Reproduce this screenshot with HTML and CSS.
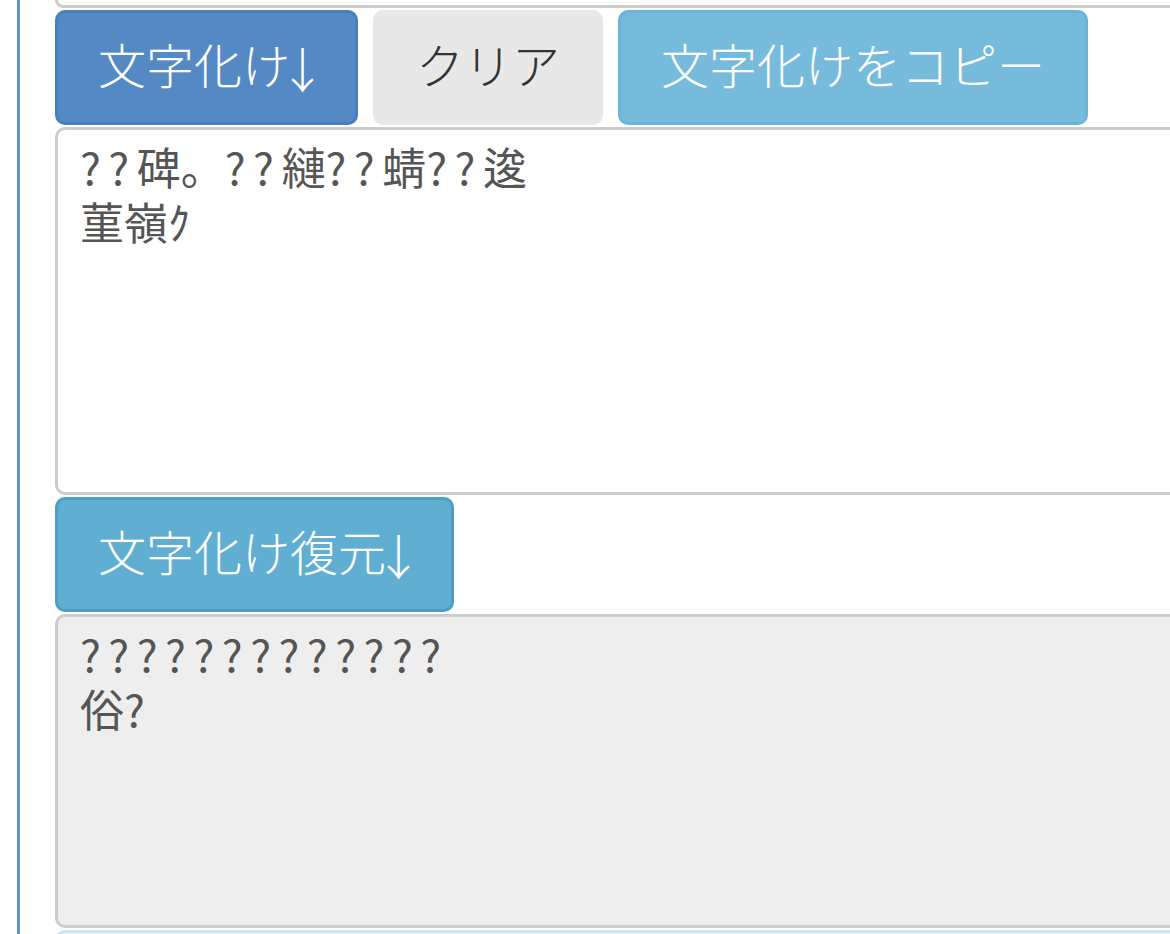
FILE: index.html
```html
<!DOCTYPE html>
<html lang="ja">
<head>
<meta charset="utf-8">
<title>文字化け</title>
<link rel="stylesheet" href="styles.css">
</head>
<body>
<div class="frame">
  <div class="panel">
    <div class="prev-box"></div>
    <div class="btn-row">
      <button class="btn btn-primary">文字化け<span class="arrow">↓</span></button>
      <button class="btn btn-clear">クリア</button>
      <button class="btn btn-copy">文字化けをコピー</button>
    </div>
    <div class="area"><span class="q">??</span>碑。<span class="q">??</span>縺<span class="q">??</span>蜻<span class="q">??</span>逡<br>菫嶺ｸ</div>
    <div class="btn-row">
      <button class="btn btn-info">文字化け復元<span class="arrow">↓</span></button>
    </div>
    <div class="area area-readonly"><span class="q">?????????????</span><br>俗<span class="q">?</span></div>
    <div class="next-box"></div>
  </div>
</div>
</body>
</html>
```

FILE: styles.css
```css
html, body {
  margin: 0;
  padding: 0;
  background: #fff;
  overflow: hidden;
  width: 1170px;
  height: 934px;
}

body {
  font-family: "Noto Sans CJK JP", "Noto Sans", sans-serif;
}

.frame {
  margin-left: 17px;
  border-left: 3px solid #6194cd;
  height: 934px;
  padding-left: 35px;
}

.panel {
  width: 1240px;
  display: flex;
  flex-direction: column;
}

.prev-box {
  height: 5px;
  border: 3px solid #cccccc;
  border-top: none;
  border-radius: 0 0 10px 10px;
  background: #fff;
}

.btn-row {
  display: flex;
  gap: 15px;
  margin-top: 2px;
}

.btn {
  font-family: "Noto Sans CJK JP", sans-serif;
  font-size: 48px;
  font-weight: 300;
  line-height: 1;
  height: 115px;
  padding: 0 40px 9px;
  border: 3px solid transparent;
  border-radius: 10px;
  color: #fff;
  display: flex;
  align-items: center;
  cursor: pointer;
}

.arrow {
  display: inline-flex;
  justify-content: center;
  width: 25px;
  position: relative;
  top: 4px;
}

.btn-primary {
  background: #5589c4;
  border-color: #4a7dbb;
}

.btn-clear {
  background: #e8e8e8;
  border-color: #e8e8e8;
  color: #333;
}

.btn-copy {
  background: #76bbdb;
  border-color: #69b4d7;
}

.btn-info {
  background: #60afd3;
  border-color: #4f9dc1;
}

.area {
  margin-top: 2px;
  border: 3px solid #cccccc;
  border-radius: 10px;
  background: #fff;
  color: #555;
  font-size: 44px;
  line-height: 55px;
  padding: 9px 22px;
  box-sizing: border-box;
  height: 368px;
}

.q {
  letter-spacing: 7.5px;
}

.area-readonly {
  background: #eeeeee;
  height: 314px;
}

.next-box {
  margin-top: 2px;
  height: 20px;
  border: 3px solid #c6e9f3;
  border-radius: 10px;
  background: #dff1f8;
}
```
